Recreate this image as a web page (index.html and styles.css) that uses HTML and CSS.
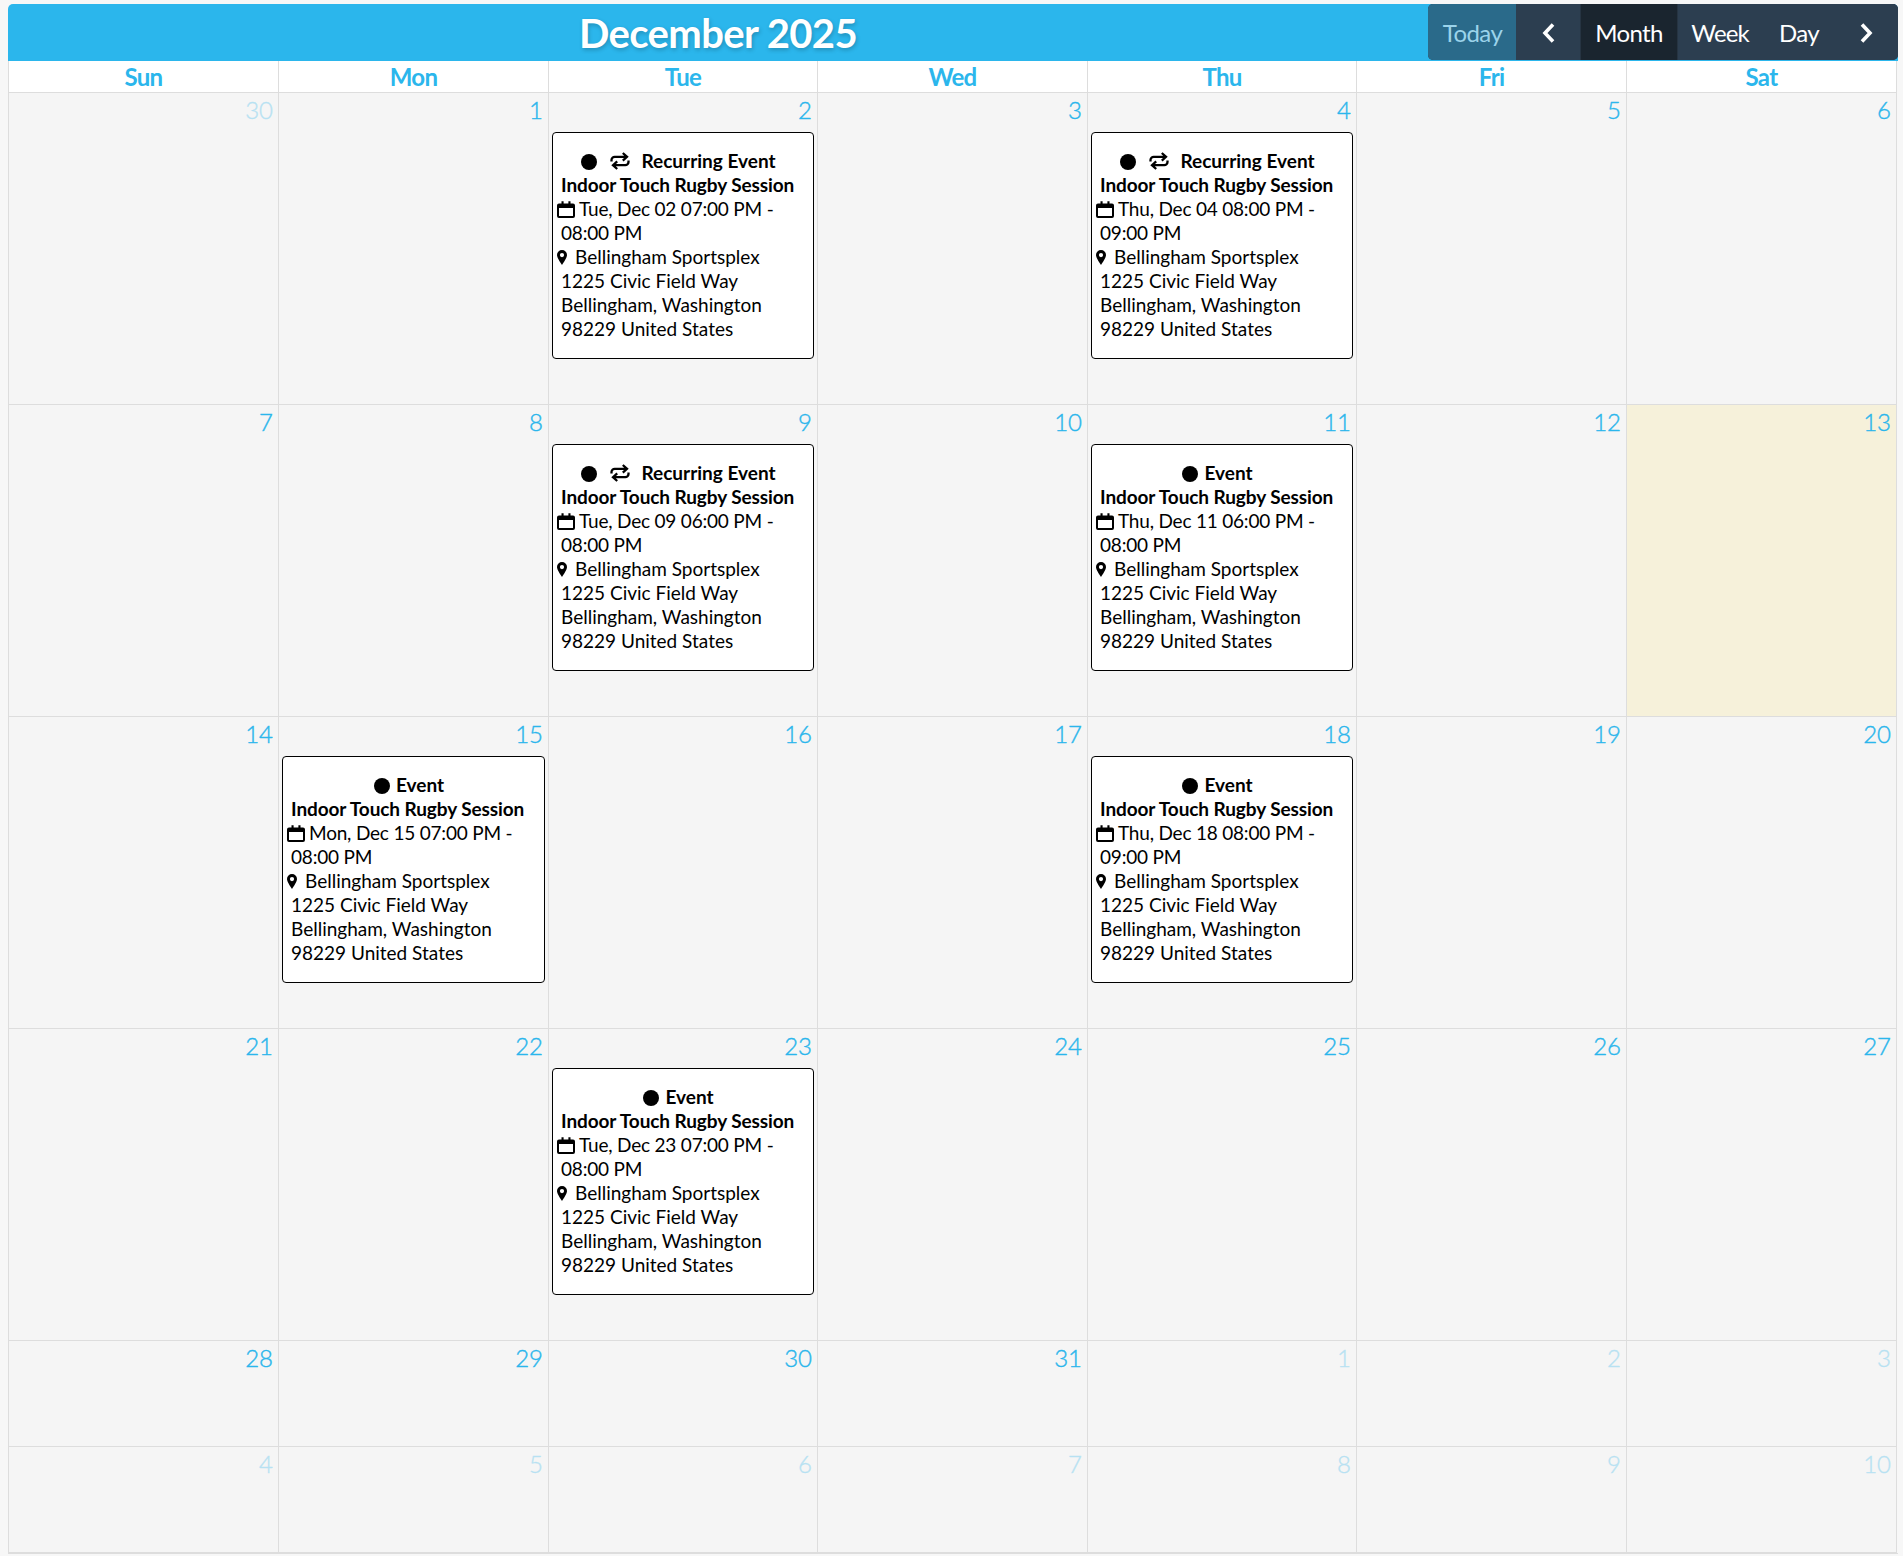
FILE: index.html
```html
<!DOCTYPE html>
<html lang="en">
<head>
<meta charset="utf-8">
<title>December 2025</title>
<link rel="stylesheet" href="styles.css">
</head>
<body>
<svg class="defs" width="0" height="0" aria-hidden="true">
  <symbol id="i-repeat" viewBox="0 0 20 18"><path d="M1.500 9.500V8a3.200 3.200 0 0 1 3.200-3.200H17M12.800 1 17 4.800l-4.200 3.800M18.500 8.500V10a3.200 3.200 0 0 1-3.200 3.200H3M7.200 9.400 3 13.200 7.200 17" fill="none" stroke="#000" stroke-width="2.300"/></symbol>
  <symbol id="i-cal" viewBox="0 0 18 17"><path fill-rule="evenodd" d="M2 2.500h2.500V.3h2.100v2.200h4.800V.3h2.100v2.200H16a2 2 0 0 1 2 2V15a2 2 0 0 1-2 2H2a2 2 0 0 1-2-2V4.500a2 2 0 0 1 2-2Zm0 4.500v8h14V7Z"/></symbol>
  <symbol id="i-pin" viewBox="0 0 10 15"><path fill-rule="evenodd" d="M5 0a5 5 0 0 1 5 5c0 2.600-3 7-5 10C3 12 0 7.600 0 5a5 5 0 0 1 5-5Zm0 3a2 2 0 1 0 0 4.200A2 2 0 0 0 5 3Z"/></symbol>
</svg>
<main class="calendar">
  <header class="toolbar">
    <h1 class="title">December 2025</h1>
    <nav class="buttons">
      <button class="btn btn-today">Today</button>
      <button class="btn btn-arrow"><svg width="15" height="22" viewBox="0 0 15 22"><path d="M12 2.500 4 11l8 8.500" fill="none" stroke="#fff" stroke-width="3.600"/></svg></button>
      <button class="btn btn-active">Month</button>
      <button class="btn btn-week">Week</button>
      <button class="btn btn-day">Day</button>
      <button class="btn btn-arrow btn-next"><svg width="15" height="22" viewBox="0 0 15 22"><path d="m3 2.500 8 8.500-8 8.500" fill="none" stroke="#fff" stroke-width="3.600"/></svg></button>
    </nav>
  </header>
  <div class="grid">
    <div class="dow">Sun</div><div class="dow">Mon</div><div class="dow">Tue</div><div class="dow">Wed</div><div class="dow">Thu</div><div class="dow">Fri</div><div class="dow">Sat</div>

    <div class="day other"><div class="num">30</div></div>
    <div class="day"><div class="num">1</div></div>
    <div class="day"><div class="num">2</div>
      <article class="event">
        <div class="ev-head"><span class="dot"></span><svg class="ic-repeat"><use href="#i-repeat"/></svg><span>Recurring Event</span></div>
        <div class="ev-name">Indoor Touch Rugby Session</div>
        <div class="ev-time"><svg class="ic-cal"><use href="#i-cal"/></svg>Tue, Dec 02 07:00 PM - 08:00 PM</div>
        <div class="ev-line"><svg class="ic-pin"><use href="#i-pin"/></svg>Bellingham Sportsplex</div>
        <div class="ev-line">1225 Civic Field Way</div>
        <div class="ev-line">Bellingham, Washington</div>
        <div class="ev-line">98229 United States</div>
      </article>
    </div>
    <div class="day"><div class="num">3</div></div>
    <div class="day"><div class="num">4</div>
      <article class="event">
        <div class="ev-head"><span class="dot"></span><svg class="ic-repeat"><use href="#i-repeat"/></svg><span>Recurring Event</span></div>
        <div class="ev-name">Indoor Touch Rugby Session</div>
        <div class="ev-time"><svg class="ic-cal"><use href="#i-cal"/></svg>Thu, Dec 04 08:00 PM - 09:00 PM</div>
        <div class="ev-line"><svg class="ic-pin"><use href="#i-pin"/></svg>Bellingham Sportsplex</div>
        <div class="ev-line">1225 Civic Field Way</div>
        <div class="ev-line">Bellingham, Washington</div>
        <div class="ev-line">98229 United States</div>
      </article>
    </div>
    <div class="day"><div class="num">5</div></div>
    <div class="day"><div class="num">6</div></div>

    <div class="day"><div class="num">7</div></div>
    <div class="day"><div class="num">8</div></div>
    <div class="day"><div class="num">9</div>
      <article class="event">
        <div class="ev-head"><span class="dot"></span><svg class="ic-repeat"><use href="#i-repeat"/></svg><span>Recurring Event</span></div>
        <div class="ev-name">Indoor Touch Rugby Session</div>
        <div class="ev-time"><svg class="ic-cal"><use href="#i-cal"/></svg>Tue, Dec 09 06:00 PM - 08:00 PM</div>
        <div class="ev-line"><svg class="ic-pin"><use href="#i-pin"/></svg>Bellingham Sportsplex</div>
        <div class="ev-line">1225 Civic Field Way</div>
        <div class="ev-line">Bellingham, Washington</div>
        <div class="ev-line">98229 United States</div>
      </article>
    </div>
    <div class="day"><div class="num">10</div></div>
    <div class="day"><div class="num">11</div>
      <article class="event">
        <div class="ev-head"><span class="dot"></span><span>Event</span></div>
        <div class="ev-name">Indoor Touch Rugby Session</div>
        <div class="ev-time"><svg class="ic-cal"><use href="#i-cal"/></svg>Thu, Dec 11 06:00 PM - 08:00 PM</div>
        <div class="ev-line"><svg class="ic-pin"><use href="#i-pin"/></svg>Bellingham Sportsplex</div>
        <div class="ev-line">1225 Civic Field Way</div>
        <div class="ev-line">Bellingham, Washington</div>
        <div class="ev-line">98229 United States</div>
      </article>
    </div>
    <div class="day"><div class="num">12</div></div>
    <div class="day today"><div class="num">13</div></div>

    <div class="day"><div class="num">14</div></div>
    <div class="day"><div class="num">15</div>
      <article class="event">
        <div class="ev-head"><span class="dot"></span><span>Event</span></div>
        <div class="ev-name">Indoor Touch Rugby Session</div>
        <div class="ev-time"><svg class="ic-cal"><use href="#i-cal"/></svg>Mon, Dec 15 07:00 PM - 08:00 PM</div>
        <div class="ev-line"><svg class="ic-pin"><use href="#i-pin"/></svg>Bellingham Sportsplex</div>
        <div class="ev-line">1225 Civic Field Way</div>
        <div class="ev-line">Bellingham, Washington</div>
        <div class="ev-line">98229 United States</div>
      </article>
    </div>
    <div class="day"><div class="num">16</div></div>
    <div class="day"><div class="num">17</div></div>
    <div class="day"><div class="num">18</div>
      <article class="event">
        <div class="ev-head"><span class="dot"></span><span>Event</span></div>
        <div class="ev-name">Indoor Touch Rugby Session</div>
        <div class="ev-time"><svg class="ic-cal"><use href="#i-cal"/></svg>Thu, Dec 18 08:00 PM - 09:00 PM</div>
        <div class="ev-line"><svg class="ic-pin"><use href="#i-pin"/></svg>Bellingham Sportsplex</div>
        <div class="ev-line">1225 Civic Field Way</div>
        <div class="ev-line">Bellingham, Washington</div>
        <div class="ev-line">98229 United States</div>
      </article>
    </div>
    <div class="day"><div class="num">19</div></div>
    <div class="day"><div class="num">20</div></div>

    <div class="day"><div class="num">21</div></div>
    <div class="day"><div class="num">22</div></div>
    <div class="day"><div class="num">23</div>
      <article class="event">
        <div class="ev-head"><span class="dot"></span><span>Event</span></div>
        <div class="ev-name">Indoor Touch Rugby Session</div>
        <div class="ev-time"><svg class="ic-cal"><use href="#i-cal"/></svg>Tue, Dec 23 07:00 PM - 08:00 PM</div>
        <div class="ev-line"><svg class="ic-pin"><use href="#i-pin"/></svg>Bellingham Sportsplex</div>
        <div class="ev-line">1225 Civic Field Way</div>
        <div class="ev-line">Bellingham, Washington</div>
        <div class="ev-line">98229 United States</div>
      </article>
    </div>
    <div class="day"><div class="num">24</div></div>
    <div class="day"><div class="num">25</div></div>
    <div class="day"><div class="num">26</div></div>
    <div class="day"><div class="num">27</div></div>

    <div class="day"><div class="num">28</div></div>
    <div class="day"><div class="num">29</div></div>
    <div class="day"><div class="num">30</div></div>
    <div class="day"><div class="num">31</div></div>
    <div class="day other"><div class="num">1</div></div>
    <div class="day other"><div class="num">2</div></div>
    <div class="day other"><div class="num">3</div></div>

    <div class="day other"><div class="num">4</div></div>
    <div class="day other"><div class="num">5</div></div>
    <div class="day other"><div class="num">6</div></div>
    <div class="day other"><div class="num">7</div></div>
    <div class="day other"><div class="num">8</div></div>
    <div class="day other"><div class="num">9</div></div>
    <div class="day other"><div class="num">10</div></div>
  </div>
</main>
</body>
</html>
```

FILE: styles.css
```css
* { box-sizing: border-box; }
html, body { margin: 0; padding: 0; }
body {
  background: #f7f7f7;
  font-family: "Lato", "Liberation Sans", sans-serif;
  color: #000;
}
.defs { position: absolute; }
.calendar { margin: 4px 5px 0 8px; }

.toolbar {
  display: flex;
  align-items: stretch;
  height: 57px;
  background: #2bb6ec;
  border-radius: 5px 5px 0 0;
  padding-bottom: 1px;
}
.title {
  flex: 1;
  margin: 0;
  text-align: center;
  color: #fff;
  font-size: 40px;
  font-weight: 700;
  line-height: 58px;
  letter-spacing: -.6px;
  text-shadow: 1px 2px 4px rgba(0, 0, 0, .22);
}
.buttons { display: flex; width: 470px; border-radius: 5px; overflow: hidden; background: #2c3e50; }
.btn {
  border: 0;
  padding: 0;
  background: #2c3e50;
  color: #fff;
  font: 400 24px "Lato", sans-serif;
  letter-spacing: -.6px;
  display: flex;
  align-items: center;
  justify-content: center;
}
.btn-today { width: 88px; background: #2a6a8a; color: #9bd3ea; padding-left: 1px; }
.btn-arrow { width: 64px; padding-top: 2px; }
.btn-active { width: 98px; background: #1a252f; box-shadow: inset 1px 0 0 #263442, inset -1px 0 0 #263442; }
.btn-week { width: 86px; letter-spacing: -.9px; padding-right: 2px; }
.btn-day { width: 70px; }
.btn-next { flex: 1; width: auto; }

.grid {
  display: grid;
  grid-template-columns: 270px 270px 269px 270px 269px 270px 270px;
  grid-template-rows: 32px repeat(4, 312px) 106px 106px;
  justify-content: start;
  border-left: 1px solid #ddd;
  border-bottom: 1px solid #ddd;
}
.dow {
  background: #fff;
  border-right: 1px solid #ddd;
  border-bottom: 1px solid #ddd;
  color: #2bb6ec;
  font-size: 24px;
  font-weight: 700;
  line-height: 31px;
  letter-spacing: -.7px;
  text-align: center;
}
.day {
  background: #f5f5f5;
  border-right: 1px solid #ddd;
  border-bottom: 1px solid #ddd;
  padding: 0 3px;
  min-width: 0;
}
.today { background: #f6f1da; }
.num {
  color: #2bb6ec;
  font-size: 24px;
  font-weight: 300;
  -webkit-text-stroke: .4px #2bb6ec;
  line-height: 34px;
  height: 39px;
  text-align: right;
  padding-right: 2px;
}
.other .num { opacity: .3; }

.event {
  background: #fff;
  border: 1px solid #000;
  border-radius: 4px;
  padding: 16px 8px 17px;
  font-size: 19px;
  line-height: 24px;
}
.ev-head {
  display: flex;
  align-items: center;
  justify-content: center;
  font-weight: 700;
  padding-right: 9px;
}
.dot {
  width: 16px;
  height: 16px;
  margin-top: 1px;
  border-radius: 50%;
  background: #000;
  margin-right: 6px;
}
.ic-repeat { width: 20px; height: 18px; margin: 0 11px 0 7px; }
.ev-name { font-weight: 700; white-space: nowrap; letter-spacing: -.1px; }
.ev-time { letter-spacing: -.2px; }
.ic-cal { width: 18px; height: 17px; margin: 0 4px 0 -4px; vertical-align: -2px; }
.ic-pin { width: 10px; height: 15px; margin: 0 8px 0 -4px; vertical-align: -1px; }
```
